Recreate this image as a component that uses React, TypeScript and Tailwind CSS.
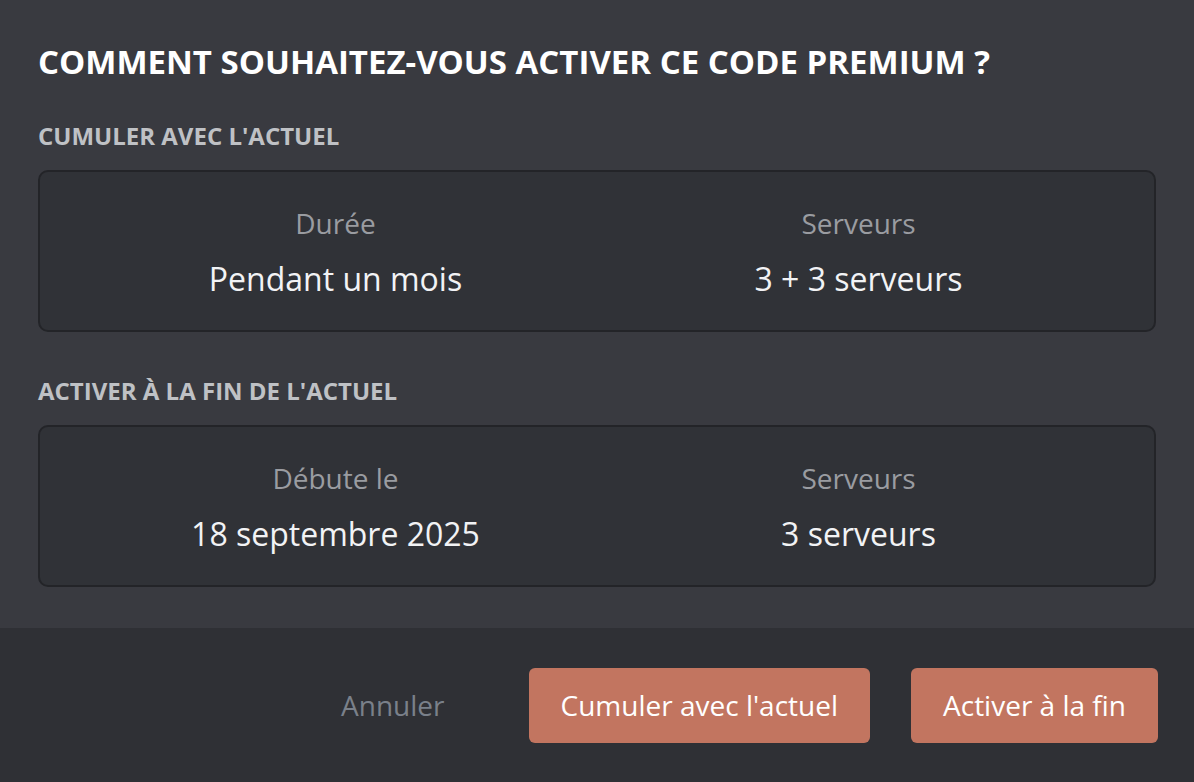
import React from "react";

function Card({ items }: { items: { label: string; value: string }[] }) {
  return (
    <div className="grid grid-cols-2 rounded-[10px] border-2 border-[#232428] bg-[#303237] px-[34px] h-[162px] items-center">
      {items.map((it) => (
        <div key={it.label} className="flex flex-col items-center">
          <div className="text-[28px] leading-[34px] text-[#9a9ca1]">{it.label}</div>
          <div className="mt-[22px] text-[32px] leading-[34px] text-[#f2f3f5]">{it.value}</div>
        </div>
      ))}
    </div>
  );
}

export default function App() {
  return (
    <div
      className="w-[1194px] h-[782px] flex flex-col bg-[#393a40] overflow-hidden"
      style={{ fontFamily: '"Open Sans", "Noto Sans", sans-serif' }}
    >
      <div className="flex-1 px-[38px] pt-[40px]">
        <h1 className="text-[33px] leading-[44px] font-bold text-white">
          COMMENT SOUHAITEZ-VOUS ACTIVER CE CODE PREMIUM ?
        </h1>
        <h2 className="mt-[37px] text-[24px] leading-[30px] font-bold text-[#bfc1c5]">
          CUMULER AVEC L'ACTUEL
        </h2>
        <div className="mt-[19px]">
          <Card
            items={[
              { label: "Durée", value: "Pendant un mois" },
              { label: "Serveurs", value: "3 + 3 serveurs" },
            ]}
          />
        </div>
        <h2 className="mt-[44px] text-[24px] leading-[30px] font-bold text-[#bfc1c5]">
          ACTIVER À LA FIN DE L'ACTUEL
        </h2>
        <div className="mt-[19px]">
          <Card
            items={[
              { label: "Débute le", value: "18 septembre 2025" },
              { label: "Serveurs", value: "3 serveurs" },
            ]}
          />
        </div>
      </div>
      <div className="h-[154px] bg-[#2f3035] flex items-center justify-end px-[36px]">
        <button className="text-[28px] text-[#7a808a] px-[20px] mr-[64px]">Annuler</button>
        <button className="h-[75px] px-[32px] rounded-[6px] bg-[#c27560] text-white text-[28px]">
          Cumuler avec l'actuel
        </button>
        <button className="ml-[41px] h-[75px] px-[32px] rounded-[6px] bg-[#c27560] text-white text-[28px]">
          Activer à la fin
        </button>
      </div>
    </div>
  );
}
